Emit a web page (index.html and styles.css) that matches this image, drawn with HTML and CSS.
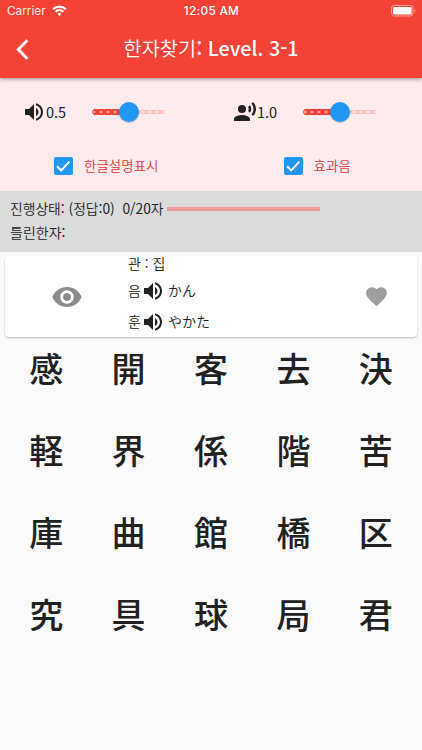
FILE: index.html
```html
<!DOCTYPE html>
<html lang="ko">
<head>
    <meta charset="UTF-8">
    <meta name="viewport" content="width=device-width, initial-scale=1.0">
    <title>한자찾기</title>
    <link rel="stylesheet" href="styles.css">
</head>
<body>
    <svg width="0" height="0" class="sprite">
        <symbol id="icon-volume" viewBox="0 0 24 24">
            <path d="M3 9v6h4l5 5V4L7 9H3zm13.5 3c0-1.77-1.02-3.29-2.5-4.03v8.05c1.48-.73 2.5-2.25 2.5-4.02zM14 3.23v2.06c2.89.86 5 3.54 5 6.71s-2.11 5.85-5 6.71v2.06c4.01-.91 7-4.49 7-8.77s-2.99-7.86-7-8.77z"/>
        </symbol>
        <symbol id="icon-check" viewBox="0 0 18 18">
            <path d="M3 9l4 4 8-8.5" fill="none" stroke="#fff" stroke-width="2"/>
        </symbol>
    </svg>

    <header class="app-bar">
        <div class="status-bar">
            <div class="carrier">
                <span>Carrier</span>
                <svg class="wifi" viewBox="0 0 16 12">
                    <path d="M8 12l2.3-2.5a3.4 3.4 0 0 0-4.6 0z" fill="#fff"/>
                    <path d="M3.7 7.3a6.3 6.3 0 0 1 8.6 0M1 4.5a10.2 10.2 0 0 1 14 0" fill="none" stroke="#fff" stroke-width="2.3"/>
                </svg>
            </div>
            <span class="time">12:05 AM</span>
            <svg class="battery" viewBox="0 0 25 12">
                <rect x=".5" y=".5" width="21.5" height="10.5" rx="2.8" fill="none" stroke="#fff" stroke-opacity=".5"/>
                <rect x="2" y="2" width="18.5" height="7.5" rx="1.3" fill="#fff"/>
                <path d="M23.2 4v3.6c1.4-.6 1.4-3 0-3.6z" fill="#fff" fill-opacity=".5"/>
            </svg>
        </div>
        <div class="title-bar">
            <svg class="back" viewBox="0 0 12 20">
                <path d="M10.7 1.2L2 10l8.7 8.8" fill="none" stroke="#fff" stroke-width="2.8"/>
            </svg>
            <h1>한자찾기<span>: Level. 3-1</span></h1>
        </div>
    </header>

    <section class="settings">
        <div class="setting">
            <svg class="icon"><use href="#icon-volume"/></svg>
            <span class="value">0.5</span>
            <div class="slider"><i class="thumb"></i></div>
        </div>
        <div class="setting">
            <svg class="icon" viewBox="0 0 24 24">
                <circle cx="9" cy="9" r="4"/>
                <path d="M9 15c-2.67 0-8 1.34-8 4v2h16v-2c0-2.66-5.33-4-8-4zm7.76-9.64l-1.68 1.69c.84 1.18.84 2.71 0 3.89l1.68 1.69c2.02-2.02 2.02-5.07 0-7.27zM20.07 2l-1.63 1.63c2.77 3.02 2.77 7.56 0 10.74L20.07 16c3.9-3.89 3.91-9.95 0-14z"/>
            </svg>
            <span class="value">1.0</span>
            <div class="slider"><i class="thumb"></i></div>
        </div>
        <div class="option">
            <svg class="checkbox"><use href="#icon-check"/></svg>
            <span>한글설명표시</span>
        </div>
        <div class="option">
            <svg class="checkbox"><use href="#icon-check"/></svg>
            <span>효과음</span>
        </div>
    </section>

    <section class="progress">
        <div class="progress-row">
            <span class="status-text">진행상태<b>: (</b>정답<b>:0) &nbsp;0/20</b>자</span>
            <div class="progress-bar"></div>
        </div>
        <div class="progress-row">틀린한자<b>:</b></div>
    </section>

    <section class="card">
        <svg class="eye" viewBox="0 0 24 24">
            <path d="M12 4.5C7 4.5 2.73 7.61 1 12c1.73 4.39 6 7.5 11 7.5s9.27-3.11 11-7.5c-1.73-4.39-6-7.5-11-7.5zM12 17c-2.76 0-5-2.24-5-5s2.24-5 5-5 5 2.24 5 5-2.24 5-5 5zm0-8c-1.66 0-3 1.34-3 3s1.34 3 3 3 3-1.34 3-3-1.34-3-3-3z"/>
        </svg>
        <div class="meaning">
            <div class="meaning-title">관 : 집</div>
            <div class="reading">
                <span>음</span>
                <svg class="icon"><use href="#icon-volume"/></svg>
                <span class="kana" lang="ja">かん</span>
            </div>
            <div class="reading">
                <span>훈</span>
                <svg class="icon"><use href="#icon-volume"/></svg>
                <span class="kana" lang="ja">やかた</span>
            </div>
        </div>
        <svg class="heart" viewBox="0 0 24 24">
            <path d="M12 21.35l-1.45-1.32C5.4 15.36 2 12.28 2 8.5 2 5.42 4.42 3 7.5 3c1.74 0 3.41.81 4.5 2.09C13.09 3.81 14.76 3 16.5 3 19.58 3 22 5.42 22 8.5c0 3.78-3.4 6.86-8.55 11.54L12 21.35z"/>
        </svg>
    </section>

    <main class="kanji-grid" lang="ja">
        <div>感</div>
        <div>開</div>
        <div>客</div>
        <div>去</div>
        <div>決</div>
        <div>軽</div>
        <div>界</div>
        <div>係</div>
        <div>階</div>
        <div>苦</div>
        <div>庫</div>
        <div>曲</div>
        <div>館</div>
        <div>橋</div>
        <div>区</div>
        <div>究</div>
        <div>具</div>
        <div>球</div>
        <div>局</div>
        <div>君</div>
    </main>
</body>
</html>
```
FILE: styles.css
```css
* {
    box-sizing: border-box;
}

body {
    margin: 0;
    height: 750px;
    overflow: hidden;
    background-color: #fafafa;
    color: #212121;
    font-family: "Noto Sans CJK KR", sans-serif;
    font-size: 14px;
    font-weight: 350;
}

svg {
    display: block;
    flex-shrink: 0;
}

.sprite {
    display: none;
}

.app-bar {
    position: relative;
    height: 78px;
    background-color: #f44336;
    color: white;
    box-shadow: 0 1px 4px rgba(0, 0, 0, 0.4);
}

.status-bar {
    display: grid;
    grid-template-columns: 1fr auto 1fr;
    align-items: center;
    height: 22px;
    padding: 0 6px 0 7px;
    font-family: Inter, sans-serif;
    font-size: 11.8px;
    font-weight: 400;
}

.carrier {
    display: flex;
    align-items: center;
    gap: 6px;
}

.carrier span {
    opacity: 0.9;
}

.wifi {
    width: 15px;
    height: 11px;
    margin-top: -2px;
}

.time {
    font-weight: 500;
    letter-spacing: 0.3px;
}

.battery {
    width: 25px;
    height: 12px;
    justify-self: end;
}

.title-bar {
    display: grid;
    grid-template-columns: 1fr auto 1fr;
    align-items: center;
    height: 52px;
    padding: 0 16px;
}

.back {
    width: 13px;
    height: 21px;
    margin-top: 2px;
}

h1 {
    margin: 0;
    font-size: 19.8px;
    font-weight: 350;
    line-height: 50px;
}

h1 span {
    font-weight: 500;
}

.settings {
    display: grid;
    grid-template-columns: 1fr 1fr;
    grid-template-rows: 68px 1fr;
    height: 112.5px;
    background-color: #ffebee;
}

.setting {
    display: flex;
    align-items: center;
    padding-left: 22px;
}

.icon {
    width: 24px;
    height: 24px;
    fill: #212121;
}

.value {
    width: 46px;
    margin-top: -2px;
    font-size: 14.5px;
    font-weight: 400;
}

.slider {
    display: flex;
    align-items: center;
    justify-content: center;
    width: 73px;
    height: 20px;
    background:
        radial-gradient(circle, rgba(255, 255, 255, 0.6) 1px, transparent 1.6px) -1.5px 50% / 7px 6px repeat-x,
        linear-gradient(#f44336, #f44336) 3px 50% / 34px 6px no-repeat,
        linear-gradient(#fbc2c1, #fbc2c1) 37px 50% / 36px 4px no-repeat,
        radial-gradient(circle, #f44336 2.7px, transparent 3.2px) 0 50% / 6px 6px no-repeat;
}

.thumb {
    width: 20px;
    height: 20px;
    border-radius: 50%;
    background-color: #2196f3;
    box-shadow: 0 1px 1px rgba(0, 0, 0, 0.2);
}

.option {
    display: flex;
    align-items: center;
    justify-content: center;
    gap: 11px;
    padding: 0 0 5px 2px;
    color: #e53935;
    font-size: 13.5px;
    line-height: 18px;
}

.option span {
    margin-top: -2px;
}

.checkbox {
    width: 18.5px;
    height: 18.5px;
    border-radius: 2px;
    background-color: #2196f3;
}

.progress {
    height: 61px;
    padding: 5px 10px 0;
    background-color: #dbdbdb;
}

.progress-row {
    display: flex;
    align-items: center;
    height: 24px;
    line-height: 20px;
}

.progress b {
    font-weight: 400;
}

.status-text {
    width: 157px;
    font-size: 13.8px;
    white-space: nowrap;
}

.progress-bar {
    width: 153px;
    height: 4px;
    margin-top: 2px;
    background-color: #ef9a9a;
}

.card {
    display: grid;
    grid-template-columns: 123px 1fr 82px;
    align-items: center;
    height: 81px;
    margin: 4.5px 5px 0;
    background-color: white;
    border-radius: 4px;
    box-shadow: 0 1px 2px rgba(0, 0, 0, 0.25);
}

.eye {
    width: 32px;
    height: 32px;
    justify-self: center;
    fill: #8c8c8c;
}

.meaning {
    align-self: start;
}

.meaning-title {
    height: 20px;
    line-height: 15px;
}

.reading {
    display: flex;
    align-items: center;
    height: 31px;
}

.reading span {
    margin-top: -3px;
}

.reading .icon {
    margin-top: -1px;
}

.reading .kana {
    margin-left: 3px;
    font-family: "Noto Sans CJK JP", sans-serif;
}

.heart {
    width: 25px;
    height: 25px;
    margin-bottom: 2px;
    justify-self: center;
    fill: #9e9e9e;
}

.kanji-grid {
    display: grid;
    grid-template-columns: repeat(5, 1fr);
    grid-auto-rows: 82.3px;
    padding: 5.6px 5px 0;
    font-family: "Noto Sans CJK JP", sans-serif;
    font-size: 34px;
    font-weight: 500;
    line-height: 50px;
    text-align: center;
}
```
